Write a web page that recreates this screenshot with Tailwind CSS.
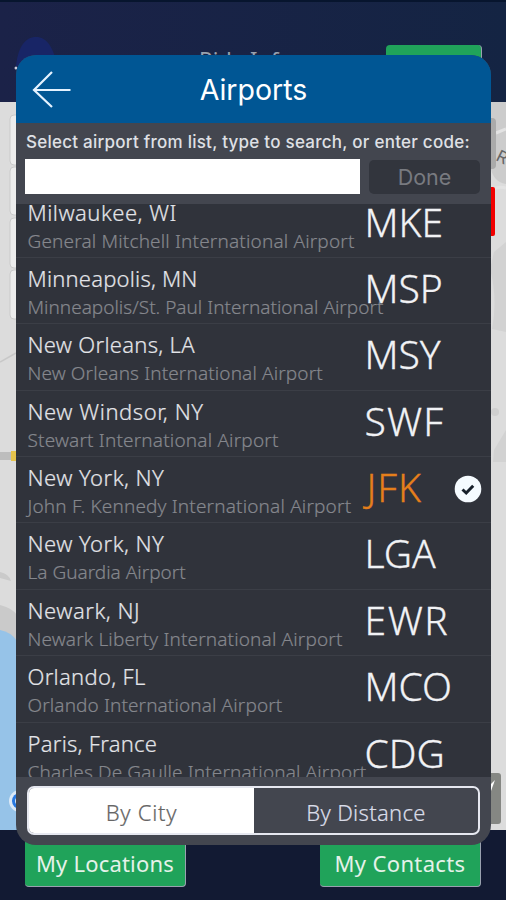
<!DOCTYPE html>
<html lang="en"><head><meta charset="utf-8"><title>Airports</title>
<script src="https://cdn.jsdelivr.net/npm/@tailwindcss/browser@4"></script></head>
<body class="w-[506px] h-[900px] overflow-hidden relative bg-[#141d38] font-['Noto_Sans',sans-serif] whitespace-nowrap">
<div class="flex flex-col h-[900px]">
  <header class="h-[102px] shrink-0 relative overflow-hidden border-t-2 border-[#07152e] bg-linear-to-r from-[#1b2248] to-[#142443]">
    <svg class="absolute left-[10px] top-[28px]" width="50" height="50"><path d="M6 36C8 17 15 7 26 7s17 10 22 30z" fill="#182566"/><circle cx="6" cy="38" r="1.5" fill="#ccd"/></svg>
    <div class="absolute left-[199px] top-[42px] text-[22px] leading-[30px] text-gray-400">Ride Info</div>
    <div class="absolute left-[386px] top-[43px] w-[96px] h-[50px] rounded-sm bg-[#20a35a] border-r border-gray-400"></div>
  </header>
  <main class="h-[728px] shrink-0 bg-[#dcdcdc]">
    <svg width="506" height="728" viewBox="0 102 506 728">
      <path d="M0 362l16-9" stroke="#c8c8c8" stroke-width="1.5" fill="none"/>
      <path d="M490 102h16v82q-14-2-16-20z" fill="#cccccc"/><path d="M490 190q8-4 16-2M496 133l10-4" stroke="#e3e3e3" stroke-width="3" fill="none"/>
      <path d="M494 252l12-10v90l-14-3q6-30-2-60zM494 450l12-20v32h-13z" fill="#d2d2d2"/><circle cx="495" cy="412" r="4" fill="#cfcfcf"/>
      <g fill="#ececec" stroke="#cacaca"><rect x="10" y="115" width="20" height="50" rx="4"/>
      <rect x="10" y="167" width="20" height="48" rx="4"/>
      <rect x="10" y="218" width="20" height="50" rx="4"/>
      <rect x="10" y="270" width="20" height="49" rx="4"/></g>
      <path d="M0 456h11" stroke="#bdbdbd" stroke-width="8"/><path d="M11 456h6" stroke="#e5c34c" stroke-width="10"/>
      <path d="M0 572q9 2 11 9l-11-3zM0 605q12 3 17 10v26H0z" fill="#cacaca"/>
      <path d="M0 630q11 2 17 11v189H0z" fill="#96c3e8"/>
      <circle cx="20" cy="801" r="11" fill="#dce9f6"/><circle cx="20" cy="801" r="8" fill="#2878e0"/><circle cx="20" cy="801" r="5" fill="#dce9f6"/>
      <rect x="480" y="118" width="16" height="51" rx="4" fill="#aaaaaa"/>
      <rect x="470" y="187" width="25" height="49" rx="2" fill="#f10000"/>
      <rect x="470" y="773" width="31" height="51" rx="3" fill="#858783"/><path d="M489 786l6-6-4 11-2 1z" fill="#fff"/>
      <text x="495" y="160" font-size="17" font-family="Roboto" fill="#666" transform="rotate(26 495 160)">Rd</text>
    </svg>
  </main>
  <footer class="h-[70px] flex justify-between items-start px-[25px] pt-[8px] bg-[#121a33] text-[22px] leading-[52px] text-[#e5f2e9]">
    <div class="w-[161px] h-[49px] bg-[#20a35a] rounded-sm border-r border-b border-gray-400 text-center tracking-[0.2px]"><div class="-mt-px">My Locations</div></div>
    <div class="w-[161px] h-[49px] bg-[#20a35a] rounded-sm border-r border-b border-gray-400 text-center tracking-[0.35px]"><div class="-mt-px">My Contacts</div></div>
  </footer>
</div>
<section class="absolute left-[16px] top-[55px] w-[475px] h-[790px] rounded-[20px] overflow-hidden bg-[#43464f] flex flex-col">
  <div class="h-[68px] shrink-0 bg-[#005694] grid grid-cols-[80px_1fr_80px] items-center text-white">
    <svg class="ml-[16px] mt-[2px]" width="40" height="40" fill="none" stroke="#e4f2ff" stroke-width="2.2"><path d="M20 2L2 20l18 17M2 20h36.500"/></svg>
    <h1 class="text-center font-['Inter'] text-[28.5px] pt-[3px]">Airports</h1>
  </div>
  <div class="h-[81px] shrink-0 px-[9px] pt-[8px]">
    <div class="font-['Inter'] text-[17px] leading-[22px] font-medium text-[#dfe0e5] tracking-[0.25px] pl-px">Select airport from list, type to search, or enter code:</div>
    <div class="flex gap-[9px] mt-[6px]">
      <div class="w-[335px] h-[35px] bg-white"></div>
      <div class="w-[111px] h-[34px] mt-px rounded-[5px] bg-[#32353d] text-[#787a80] font-['Inter'] text-[21.5px] leading-[34px] text-center">Done</div>
    </div>
  </div>
  <div class="h-[573px] shrink-0 overflow-hidden bg-[#30333b]"><div id="list" class="mt-[-12.5px]"></div></div>
  <div class="h-[68px] px-[11px] pt-[9px]">
    <div class="h-[49px] w-[453px] border-2 border-[#e6e8f0] rounded-[7px] overflow-hidden flex text-[22px] leading-[49px] font-light text-center [-webkit-text-stroke:0.2px]">
      <div class="w-[225px] bg-white text-[#666] tracking-[0.7px]">By City</div>
      <div class="flex-1 text-[#d9dce8] tracking-[0.3px]">By Distance</div>
    </div>
  </div>
</section>
<script>
// city, airport, code, then the letter spacing of each in px
const rows=[
["Milwaukee, WI","General Mitchell International Airport","MKE",.48,.16,0],
["Minneapolis, MN","Minneapolis/St. Paul International Airport","MSP",.2,0,0],
["New Orleans, LA","New Orleans International Airport","MSY",.28,.12,0],
["New Windsor, NY","Stewart International Airport","SWF",.55,.17,1.2],
["New York, NY","John F. Kennedy International Airport","JFK",.45,.16,1],
["New York, NY","La Guardia Airport","LGA",.45,0,0],
["Newark, NJ","Newark Liberty International Airport","EWR",.5,.14,1.6],
["Orlando, FL","Orlando International Airport","MCO",.28,.11,0],
["Paris, France","Charles De Gaulle International Airport","CDG",.25,.12,0]];
const check='<svg class="shrink-0 mt-[18px]" width="28" height="28"><circle cx="14" cy="14" r="13.3" fill="#f5fbff"/><path d="M8.5 14.500l3.700 3.500 7-7.300" fill="none" stroke="#17202b" stroke-width="3"/></svg>';
document.getElementById('list').innerHTML=rows.map(([a,b,c,x,y,z])=>`<div class="h-[66.4px] flex border-b border-[#3b3e46] pl-[11.5px]"><div class="w-[337px] shrink-0 pt-[6px]"><div class="text-[22px] leading-[28px] font-light text-[#e3e4e8] [-webkit-text-stroke:0.2px]" style="letter-spacing:${x}px">${a}</div><div class="text-[19px] leading-[30px] font-light text-[#85878d] [-webkit-text-stroke:0.2px]" style="letter-spacing:${y}px">${b}</div></div><div class="w-[89px] shrink-0 text-[39px] leading-[60px] font-light [-webkit-text-stroke:0.3px] ${c==='JFK'?'pl-[2px] text-[#e57f1b]':'text-[#f1f2f5]'}" style="letter-spacing:${z}px">${c}</div>${c==='JFK'?check:''}</div>`).join('');
</script>
</body></html>
